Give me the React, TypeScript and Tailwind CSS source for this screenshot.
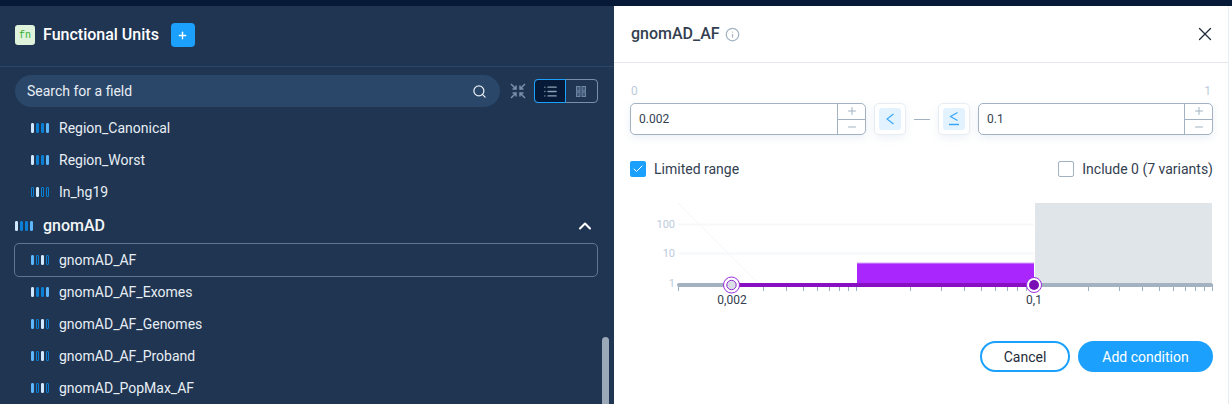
import { Search, X, Info, Plus, Minus, ChevronUp, Check, List } from 'lucide-react';

type Bar = { color: string; outline?: boolean };

const L = '#cfe8ff';
const M = '#5eb6ff';
const D = '#0a7fd6';

const solid = (color: string): Bar => ({ color });
const line = (color: string): Bar => ({ color, outline: true });

function BarsIcon({ bars }: { bars: Bar[] }) {
  return (
    <div className="flex items-center gap-[2px]">
      {bars.map((b, i) => (
        <span
          key={i}
          className="block h-[10px] w-[3px] rounded-[1px] border"
          style={{ borderColor: b.color, background: b.outline ? 'transparent' : b.color }}
        />
      ))}
    </div>
  );
}

const afBars = [solid(M), line(D), solid(L), line(D)];
const rows: { name: string; bars: Bar[] }[] = [
  { name: 'gnomAD_AF', bars: afBars },
  { name: 'gnomAD_AF_Exomes', bars: [solid(L), solid(D), solid(D), solid(M)] },
  { name: 'gnomAD_AF_Genomes', bars: afBars },
  { name: 'gnomAD_AF_Proband', bars: afBars },
  { name: 'gnomAD_PopMax_AF', bars: afBars },
];

function Field({ name, bars, active }: { name: string; bars: Bar[]; active?: boolean }) {
  return (
    <div
      className={`flex shrink-0 items-center gap-[10px] rounded-[5px] border text-sm text-[#e8eef5] ${
        active ? '-ml-px -my-px h-[34px] border-[#5f7590] pl-[16px]' : 'h-8 border-transparent pl-[15px]'
      }`}
    >
      <BarsIcon bars={bars} />
      <span>{name}</span>
    </div>
  );
}

function Stepper({ value, width }: { value: string; width: string }) {
  return (
    <div className={`flex h-8 rounded-[5px] border border-[#a2b2c2] bg-white shadow-[0_3px_8px_rgba(90,130,180,0.12)] ${width}`}>
      <div className="flex flex-1 items-center pb-px pl-2 text-xs text-[#33404f]">{value}</div>
      <div className="flex w-7 flex-col border-l border-[#a2b2c2] text-[#a2b2c2]">
        <div className="flex flex-1 items-center justify-center border-b border-[#a2b2c2]">
          <Plus size={12} />
        </div>
        <div className="flex flex-1 items-center justify-center">
          <Minus size={12} />
        </div>
      </div>
    </div>
  );
}

function CompareButton({ underline }: { underline?: boolean }) {
  return (
    <div className="flex h-8 w-8 items-center justify-center rounded-[5px] border border-[#e8edf2] bg-white shadow-[0_3px_8px_rgba(90,130,180,0.1)]">
      <div className="flex h-[22px] w-[22px] items-center justify-center rounded-[3px] bg-[#e3f2ff]">
        <svg width="12" height="16" viewBox="0 0 12 16" fill="none" stroke="#33a4fb" strokeWidth="1.1">
          {underline ? <path d="M9.500 1.500 2.500 5.500 9.500 9.500" /> : <path d="M9.500 3 3 8 9.500 13" />}
          {underline && <path d="M1 13.500h10" strokeWidth="1.4" />}
        </svg>
      </div>
    </div>
  );
}

const TICKS = [
  678, 763, 786, 803, 817, 829, 839, 848, 856,
  910, 941, 964, 981, 995, 1007, 1017, 1026, 1034,
  1088, 1119, 1142, 1159, 1173, 1185, 1195, 1204, 1212,
];

function RangeChart() {
  return (
    <svg width="618" height="125" viewBox="614 195 618 125" className="block" style={{ fontFamily: 'Roboto, sans-serif' }}>
      <path d="M678 203 757 282" stroke="#f2f4f6" fill="none" />
      <path d="M678 224.500H1034M678 253.500H1034" stroke="#f6f8f9" strokeWidth="2" />
      <text x="675" y="228" textAnchor="end" fontSize="11" fill="#bccbdc">100</text>
      <text x="675" y="257" textAnchor="end" fontSize="11" fill="#bccbdc">10</text>
      <text x="675" y="287" textAnchor="end" fontSize="11" fill="#bccbdc">1</text>
      <rect x="1035" y="203" width="177" height="80" fill="#e0e5e9" />
      <rect x="857" y="263" width="177" height="20" fill="#a926fd" />
      <rect x="857" y="262.500" width="177" height="1" fill="#d9a8fb" />
      {TICKS.map((x) => (
        <path key={x} d={`M${x + 0.5} 284v7`} stroke="#9fb0c0" />
      ))}
      <rect x="677" y="283" width="536" height="4" rx="2" fill="#a2b2c0" />
      <rect x="739" y="283" width="295" height="4" fill="#8711c2" />
      <circle cx="731.500" cy="285" r="8" fill="white" stroke="#9a2be0" strokeWidth="1" />
      <circle cx="731.500" cy="285" r="4.700" fill="#d9dfe4" stroke="#8f2bd0" strokeWidth="1" />
      <circle cx="1034" cy="285" r="7.500" fill="white" stroke="#9a2be0" strokeWidth="1" />
      <circle cx="1034" cy="285" r="5" fill="#7a0fb5" />
      <text x="732" y="304" textAnchor="middle" fontSize="12" fill="#33404f">0,002</text>
      <text x="1034" y="304" textAnchor="middle" fontSize="12" fill="#33404f">0,1</text>
    </svg>
  );
}

export default function App() {
  return (
    <div className="flex h-[404px] w-[1232px] flex-col overflow-hidden bg-white font-['Roboto',sans-serif]">
      <div className="h-[6px] shrink-0 bg-[#061a37]" />
      <div className="flex min-h-0 flex-1">
        <aside className="relative flex w-[614px] shrink-0 flex-col overflow-hidden bg-[#1f3551]">
          <div className="flex h-[61px] shrink-0 items-center border-b border-[#2a4668] pb-[2px] pl-[15px]">
            <div className="flex h-5 w-5 items-center justify-center rounded-[3px] bg-[#dff3dc] font-['Liberation_Mono',monospace] text-[10px] text-[#35b02f]">
              fn
            </div>
            <span className="ml-2 text-base font-medium text-white">Functional Units</span>
            <div className="ml-3 flex h-6 w-6 items-center justify-center rounded-[4px] bg-[#1ba1fd] text-white">
              <Plus size={11} strokeWidth={3} />
            </div>
          </div>

          <div className="mt-2 flex shrink-0 items-center pl-[15px]">
            <div className="flex h-8 w-[485px] items-center justify-between rounded-full bg-[#2a4668] pl-3 pr-[13px] text-sm text-[#e8eef5]">
              <span>Search for a field</span>
              <Search size={15} className="text-[#e8eef5]" />
            </div>
            <svg width="16" height="16" viewBox="0 0 16 16" fill="none" stroke="#7a90aa" strokeWidth="1.5" className="ml-[10px]">
              <path d="M1 1l5 5M6 2.500V6H2.500M15 1l-5 5M10 2.500V6h3.500M1 15l5-5M6 13.500V10H2.500M15 15l-5-5M10 13.500V10h3.500" />
            </svg>
            <div className="ml-[8px] flex h-6 w-[64px] rounded-[4px] border border-[#7a90aa]">
              <div className="-m-px flex h-6 w-8 items-center justify-center rounded-l-[4px] border border-[#1ba1fd] bg-[#061a37] text-[#8fa1b5]">
                <List size={15} strokeWidth={2.2} />
              </div>
              <div className="flex flex-1 items-center justify-center">
                <svg width="10" height="11" viewBox="0 0 10 11" fill="#3f5878" stroke="#6f87a3">
                  <rect x="0.500" y="0.500" width="3.500" height="4.500" />
                  <rect x="6" y="0.500" width="3.500" height="4.500" />
                  <rect x="0.500" y="6" width="3.500" height="4.500" />
                  <rect x="6" y="6" width="3.500" height="4.500" />
                </svg>
              </div>
            </div>
          </div>

          <div className="mt-[5px] flex min-h-0 flex-1 flex-col overflow-hidden pl-[15px] pr-4">
            <Field name="Region_Canonical" bars={[solid(L), solid(D), solid(D), solid(M)]} />
            <Field name="Region_Worst" bars={[solid(L), solid(D), solid(D), solid(M)]} />
            <Field name="In_hg19" bars={[line(D), solid(L), line(D), line(D)]} />
            <div className="flex h-[36px] shrink-0 items-center gap-[10px] pr-[3px] text-base font-medium text-[#f2f6fa]">
              <BarsIcon bars={[solid(L), solid(D), solid(D), solid(M)]} />
              <span className="flex-1">gnomAD</span>
              <ChevronUp size={20} strokeWidth={2.5} className="text-white" />
            </div>
            {rows.map((r, i) => (
              <Field key={r.name} name={r.name} bars={r.bars} active={i === 0} />
            ))}
          </div>

          <div className="absolute right-[5px] top-[331px] h-[80px] w-[7px] rounded-full bg-[#9aa8b8]" />
        </aside>

        <main className="flex min-w-0 w-[615px] shrink-0 flex-col border-r border-[#e8edf2]">
          <div className="flex h-[57px] shrink-0 items-center justify-between border-b border-[#e3e7eb] pl-[17px] pr-[12px]">
            <div className="flex items-center gap-[5px]">
              <span className="text-base font-medium text-[#33404f]">gnomAD_AF</span>
              <Info size={15} className="text-[#a2b2c0]" />
            </div>
            <X size={22} strokeWidth={1.4} className="text-[#1f2b3a]" />
          </div>

          <div className="flex justify-between pl-[17px] pr-[17px] pt-[21px] text-xs leading-[14px] text-[#bccbdc]">
            <span>0</span>
            <span>1</span>
          </div>
          <div className="mt-[5px] flex items-center pl-4 pr-[15px]">
            <Stepper value="0.002" width="w-[236px]" />
            <div className="ml-2">
              <CompareButton />
            </div>
            <div className="mx-2 h-px flex-1 bg-[#a2b2c0]" />
            <CompareButton underline />
            <div className="ml-2">
              <Stepper value="0.1" width="w-[235px]" />
            </div>
          </div>

          <div className="mt-[24px] flex items-center justify-between pl-4 pr-[15px] text-sm text-[#33404f]">
            <div className="flex items-center gap-2">
              <div className="flex h-4 w-4 items-center justify-center rounded-[2px] bg-[#1ba1fd] text-white">
                <Check size={12} />
              </div>
              <span>Limited range</span>
            </div>
            <div className="flex items-center gap-2">
              <div className="h-4 w-4 rounded-[2px] border border-[#a2b2c0]" />
              <span>Include 0 (7 variants)</span>
            </div>
          </div>

          <div className="mt-[16px]">
            <RangeChart />
          </div>

          <div className="mt-[21px] flex justify-end gap-2 pr-[15px] text-sm">
            <button className="h-[31px] w-[90px] rounded-full border-2 border-[#1ba1fd] text-[#1f2b3a]">Cancel</button>
            <button className="h-[31px] w-[135px] rounded-full bg-[#1ba1fd] text-white">Add condition</button>
          </div>
        </main>
      </div>
    </div>
  );
}
